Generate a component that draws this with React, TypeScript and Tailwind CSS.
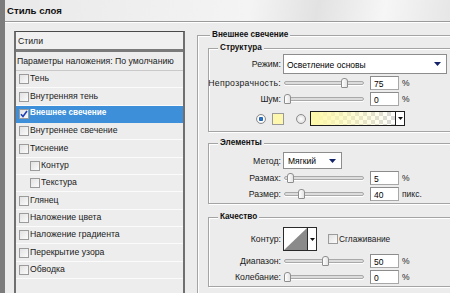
import React from "react";

const Arrow = ({ className = "" }: { className?: string }) => (
  <svg width="7" height="4" viewBox="0 0 7 4" className={className}>
    <polygon points="0,0 7,0 3.5,4" fill="#14246a" />
  </svg>
);

const Check = ({ checked = false }: { checked?: boolean }) => (
  <div className="w-[10px] h-[10px] shrink-0 border border-[#9b9b9b] bg-[linear-gradient(135deg,#e2e2e2,#fbfbfb)] flex items-center justify-center">
    {checked && (
      <svg width="8" height="8" viewBox="0 0 8 8">
        <path d="M1 4.2 L3 6.5 L7 1" stroke="#1d3fb8" strokeWidth="1.6" fill="none" />
      </svg>
    )}
  </div>
);

const ListRow = ({
  label,
  indent = false,
  selected = false,
}: {
  label: string;
  indent?: boolean;
  selected?: boolean;
}) => (
  <div
    className={
      "h-[17.35px] shrink-0 flex items-center border-b " +
      (selected
        ? "bg-[#3d8fd9] border-[#3d8fd9] text-white font-bold"
        : "border-[#fbfbfb] text-[#1a1a1a]")
    }
  >
    <div className={indent ? "ml-[14px]" : "ml-[3px]"}>
      <Check checked={selected} />
    </div>
    <span className={"ml-[1px] leading-[10px] pb-[2px] " + (selected ? "text-[8.2px]" : "text-[8.7px]")}>
      {label}
    </span>
  </div>
);

const Slider = ({ pos }: { pos: number }) => (
  <div className="relative w-[80px] h-[12px] ml-[3px] flex items-center">
    <div className="w-full h-[4px] rounded-full border border-[#a9a9a9] bg-[#dcdcdc] shadow-[0_1px_0_#fff]" />
    <div
      className="absolute top-[1px] w-[7px] h-[10px] rounded-t-[3px] rounded-b-[1px] border border-[#8e8e8e] bg-[linear-gradient(to_right,#ffffff,#e4e4e4)]"
      style={{ left: pos * 0.77 - 0.5 }}
    />
  </div>
);

const NumBox = ({ value }: { value: string }) => (
  <div className="ml-[6px] w-[29px] h-[14px] bg-white border border-[#a8a8a8] border-t-[#8c8c8c] border-l-[#8c8c8c] flex items-center pl-[3px] text-[8.5px] leading-[10px] pt-[2px]">
    {value}
  </div>
);

const Label = ({ children, wide = false }: { children: React.ReactNode; wide?: boolean }) => (
  <div
    className={
      "w-[72px] shrink-0 flex justify-end text-[8.7px] leading-[10px] text-[#1a1a1a] whitespace-nowrap " +
      (wide ? "tracking-[0.3px]" : "")
    }
  >
    <span>{children}</span>
  </div>
);

const SliderRow = ({
  label,
  value,
  pos,
  unit,
  h = "h-[16px]",
  wide = false,
}: {
  label: string;
  value: string;
  pos: number;
  unit: string;
  h?: string;
  wide?: boolean;
}) => (
  <div className={"flex items-center " + h}>
    <Label wide={wide}>{label}</Label>
    <Slider pos={pos} />
    <NumBox value={value} />
    <span className="ml-[3px] text-[8.5px] leading-[10px] text-[#1a1a1a]">{unit}</span>
  </div>
);

const Group = ({
  title,
  className = "",
  legendClass = "ml-[9px]",
  children,
}: {
  title: string;
  className?: string;
  legendClass?: string;
  children: React.ReactNode;
}) => (
  <fieldset
    className={
      "border border-[#a4a4a4] shadow-[inset_1px_1px_0_#ffffff,1px_1px_0_#ffffff] " + className
    }
  >
    <legend
      className={
        "px-[2px] bg-[#ececec] text-[8.2px] leading-[10px] font-bold text-[#111] " + legendClass
      }
    >
      {title}
    </legend>
    {children}
  </fieldset>
);

export default function App() {
  const rows: { label: string; indent?: boolean; selected?: boolean }[] = [
    { label: "Тень" },
    { label: "Внутренняя тень" },
    { label: "Внешнее свечение", selected: true },
    { label: "Внутреннее свечение" },
    { label: "Тиснение" },
    { label: "Контур", indent: true },
    { label: "Текстура", indent: true },
    { label: "Глянец" },
    { label: "Наложение цвета" },
    { label: "Наложение градиента" },
    { label: "Перекрытие узора" },
    { label: "Обводка" },
  ];

  return (
    <div className="w-[450px] h-[293px] overflow-hidden flex bg-[#ececec] font-['Liberation_Sans',Arial,sans-serif] text-black">
      <div className="w-[5px] shrink-0 bg-[#7c7c7c]" />
      <div className="flex-1 min-w-0 flex flex-col">
        <div className="h-[22px] shrink-0 flex items-center pl-[2px] border-b border-[#9a9a9a] shadow-[0_1px_0_#ffffff] bg-[linear-gradient(100deg,#e9e9e9_0%,#f4f4f4_55%,#e2e2e2_70%,#f6f6f6_85%,#e6e6e6_100%)]">
          <span className="text-[9.6px] font-bold leading-[12px] text-[#111]">Стиль слоя</span>
        </div>
        <div className="flex flex-1 min-h-0 pl-[9px]">
          {/* Left styles list */}
          <div className="mt-[9px] w-[171px] shrink-0 flex flex-col border-t border-[#4a4a4a] border-x-2 border-x-[#6f6f6f] bg-[#ededed]">
            <div className="h-[17px] shrink-0 flex items-center pl-[2px] bg-[#f0f0f0] text-[8.7px] leading-[10px] text-[#1a1a1a]">
              Стили
            </div>
            <div className="h-[3px] shrink-0 bg-[#7a7a7a]" />
            <div className="h-[19px] shrink-0 flex items-center pl-[1px] border-b border-[#c9c9c9] text-[8.7px] leading-[10px] text-[#1a1a1a]">
              Параметры наложения: По умолчанию
            </div>
            {rows.map((r) => (
              <ListRow key={r.label} label={r.label} indent={r.indent} selected={r.selected} />
            ))}
          </div>

          {/* Right options */}
          <div className="w-[270px] shrink-0 ml-[12px] mt-[8px]">
            <Group title="Внешнее свечение" className="pb-[20px]" legendClass="ml-[12px]">
              <Group title="Структура" className="ml-[10px] mt-[3px] w-[250px]">
                <div className="flex items-center h-[20px] mt-[1px]">
                  <Label>Режим:</Label>
                  <div className="ml-[2px] w-[164px] h-[20px] bg-white border border-[#8d8d8d] flex items-center justify-between pl-[3px] pr-[5px]">
                    <span className="text-[8.5px] leading-[10px] pt-[1px]">Осветление основы</span>
                    <Arrow />
                  </div>
                </div>
                <SliderRow label="Непрозрачность:" value="75" pos={75} unit="%" h="h-[16px] mt-[1px]" wide />
                <SliderRow label="Шум:" value="0" pos={0} unit="%" h="h-[15px]" />
                <div className="flex items-center h-[25px] pl-[47px]">
                  <div className="w-[10px] h-[10px] rounded-full border border-[#8c8c8c] bg-[radial-gradient(circle,#2f7fd0_0,#1f5fa8_35%,#ffffff_45%,#d8d8d8_100%)]" />
                  <div className="ml-[6px] w-[12px] h-[12px] border border-[#9a9a9a] bg-[#fdf8ad]" />
                  <div className="ml-[12px] w-[10px] h-[10px] rounded-full border border-[#8c8c8c] bg-[radial-gradient(circle,#ffffff_0,#d6d6d6_100%)]" />
                  <div className="ml-[4px] w-[95px] h-[15px] border border-[#1e1e1e] flex">
                    <div className="flex-1 bg-[linear-gradient(to_right,#fff9a8,rgba(255,249,168,0)),repeating-conic-gradient(#d9d9d9_0%_25%,#ffffff_0%_50%)] bg-[length:100%_100%,8px_8px]" />
                    <div className="w-[9px] border-l border-[#1e1e1e] bg-white flex items-center justify-center">
                      <svg width="5" height="3" viewBox="0 0 5 3">
                        <polygon points="0,0 5,0 2.5,3" fill="#111" />
                      </svg>
                    </div>
                  </div>
                </div>
              </Group>

              <Group title="Элементы" className="ml-[10px] mt-[6px] w-[250px]">
                <div className="flex items-center h-[17px] mt-[4px]">
                  <Label>Метод:</Label>
                  <div className="ml-[2px] w-[59px] h-[17px] bg-white border border-[#8d8d8d] flex items-center justify-between pl-[4px] pr-[5px]">
                    <span className="text-[8.5px] leading-[10px] pt-[1px]">Мягкий</span>
                    <Arrow />
                  </div>
                </div>
                <SliderRow label="Размах:" value="5" pos={5} unit="%" h="h-[16px] mt-[1px]" />
                <SliderRow label="Размер:" value="40" pos={19} unit="пикс." h="h-[16px] mb-[1px]" />
              </Group>

              <Group title="Качество" className="ml-[10px] mt-[8px] w-[250px]">
                <div className="flex items-center h-[24px] mt-[5px]">
                  <Label>Контур:</Label>
                  <div className="ml-[2px] h-[24px] flex border border-[#2a2a2a]">
                    <svg width="23" height="22" viewBox="0 0 23 22" className="block">
                      <rect width="23" height="22" fill="#ffffff" />
                      <polygon points="0,22 23,0 23,22" fill="#8a8a8a" />
                    </svg>
                    <div className="w-[9px] border-l border-[#2a2a2a] bg-white flex items-center justify-center">
                      <svg width="5" height="3" viewBox="0 0 5 3">
                        <polygon points="0,0 5,0 2.5,3" fill="#111" />
                      </svg>
                    </div>
                  </div>
                  <div className="ml-[11px]">
                    <Check />
                  </div>
                  <span className="ml-[1px] text-[8.3px] leading-[10px] text-[#1a1a1a]">Сглаживание</span>
                </div>
                <SliderRow label="Диапазон:" value="50" pos={50} unit="%" h="h-[16px] mt-[2px]" />
                <SliderRow label="Колебание:" value="0" pos={0} unit="%" h="h-[16px] mb-[1px]" />
              </Group>
            </Group>
          </div>
        </div>
      </div>
    </div>
  );
}
